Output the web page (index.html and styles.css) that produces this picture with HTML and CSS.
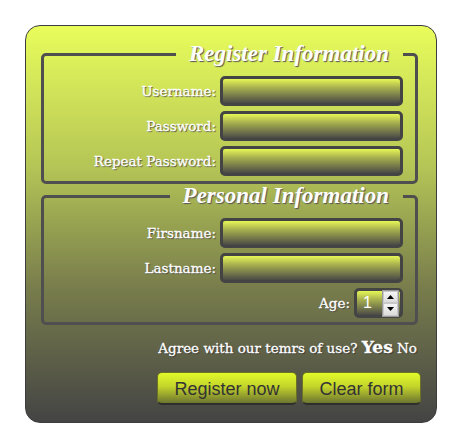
FILE: index.html
```html
<!DOCTYPE html>
<html>
<head>
<meta charset="utf-8">
<link rel="stylesheet" href="styles.css">
</head>
<body>
<form class="panel">
  <fieldset class="group">
    <legend class="group-title">Register Information</legend>
    <div class="row"><label class="lbl">Username:</label><span class="field"></span></div>
    <div class="row"><label class="lbl">Password:</label><span class="field"></span></div>
    <div class="row"><label class="lbl">Repeat Password:</label><span class="field"></span></div>
  </fieldset>
  <fieldset class="group group-2">
    <legend class="group-title">Personal Information</legend>
    <div class="row"><label class="lbl">Firsname:</label><span class="field"></span></div>
    <div class="row"><label class="lbl">Lastname:</label><span class="field"></span></div>
    <div class="row age-row"><label class="lbl">Age:</label>
      <span class="field age">
        <span class="age-val">1</span>
        <span class="spin">
          <span class="spin-btn"><svg width="7" height="4" viewBox="0 0 7 4"><path d="M0 4 L3.5 0 L7 4 Z" fill="#000"/></svg></span>
          <span class="spin-btn"><svg width="7" height="4" viewBox="0 0 7 4"><path d="M0 0 L3.5 4 L7 0 Z" fill="#000"/></svg></span>
        </span>
      </span>
    </div>
  </fieldset>
  <div class="agree">Agree with our temrs of use? <span class="yes">Yes</span> <span class="no">No</span></div>
  <div class="actions">
    <button type="button" class="btn btn-reg">Register now</button>
    <button type="button" class="btn btn-clear">Clear form</button>
  </div>
</form>
</body>
</html>
```

FILE: styles.css
```css
html, body {
  margin: 0;
  padding: 0;
  background: #fff;
}
body {
  padding: 25px 0 0 25px;
}
.panel {
  box-sizing: border-box;
  width: 412px;
  height: 398px;
  border: 1px solid #3d3d3d;
  border-radius: 15px;
  background: linear-gradient(to bottom, #e8fd5b 0%, #b6c656 35%, #7a7f4c 65%, #444444 100%);
  padding: 16px 18px 0 15px;
  font-family: "DejaVu Serif", "Liberation Serif", serif;
  color: #fff;
}
.group {
  margin: 0;
  padding: 10px 12px 5px 0;
  border: 3px solid #4f4f4f;
  border-radius: 5px;
  width: 377px;
  box-sizing: border-box;
  display: flex;
  flex-direction: column;
  gap: 5px;
}
.group-2 {
  margin-top: 0;
  padding-bottom: 4px;
}
.group-title {
  margin-left: auto;
  padding: 0 14px 0 13px;
  font-family: "Liberation Serif", serif;
  font-size: 23px;
  font-weight: bold;
  font-style: italic;
  line-height: 24px;
  color: #fff;
  text-shadow: 1px 1px 1px #555;
}
.row {
  display: flex;
  justify-content: flex-end;
  align-items: center;
  gap: 4px;
}
.lbl {
  font-size: 13.5px;
  -webkit-text-stroke: 0.3px #fff;
  text-shadow: 1px 1px 1px #444;
}
.field {
  box-sizing: border-box;
  width: 183px;
  height: 30px;
  border: 3px solid #444;
  border-radius: 5px;
  background: linear-gradient(to bottom, #e6f756 0%, #a9b24f 35%, #4a4a46 100%);
  display: inline-block;
}
.age {
  width: 49px;
  display: flex;
  align-items: center;
  justify-content: space-between;
  padding: 0 1px 0 6px;
}
.age-val {
  font-family: "Liberation Sans", Arial, sans-serif;
  font-size: 16px;
  color: #fff;
}
.spin {
  display: flex;
  flex-direction: column;
  width: 15px;
  height: 25px;
  border: 1px solid #9a9a9a;
  background: #fff;
}
.spin-btn {
  flex: 1;
  display: flex;
  align-items: center;
  justify-content: center;
  background: linear-gradient(#f4f4f4, #dcdcdc);
  border: 1px solid #c8c8c8;
}
.agree {
  text-align: right;
  margin-top: 12px;
  font-size: 13.5px;
  -webkit-text-stroke: 0.3px #fff;
  text-shadow: 1px 1px 1px #333;
  line-height: 20px;
  padding-right: 1px;
}
.yes {
  font-size: 17px;
  font-weight: bold;
}
.actions {
  display: flex;
  justify-content: flex-end;
  gap: 5px;
  margin-top: 14px;
  margin-right: -3px;
}
.btn {
  box-sizing: border-box;
  height: 33px;
  border: 1px solid #6b7225;
  border-bottom: 2px solid #2e2e2a;
  border-radius: 5px;
  background: linear-gradient(to bottom, #e2fa2a 0%, #c3d42a 45%, #6e7530 100%);
  font-family: "Liberation Sans", Arial, sans-serif;
  font-size: 18px;
  color: #333;
  padding: 3px 0 0;
}
.btn-reg { width: 140px; }
.btn-clear { width: 119px; }
```
